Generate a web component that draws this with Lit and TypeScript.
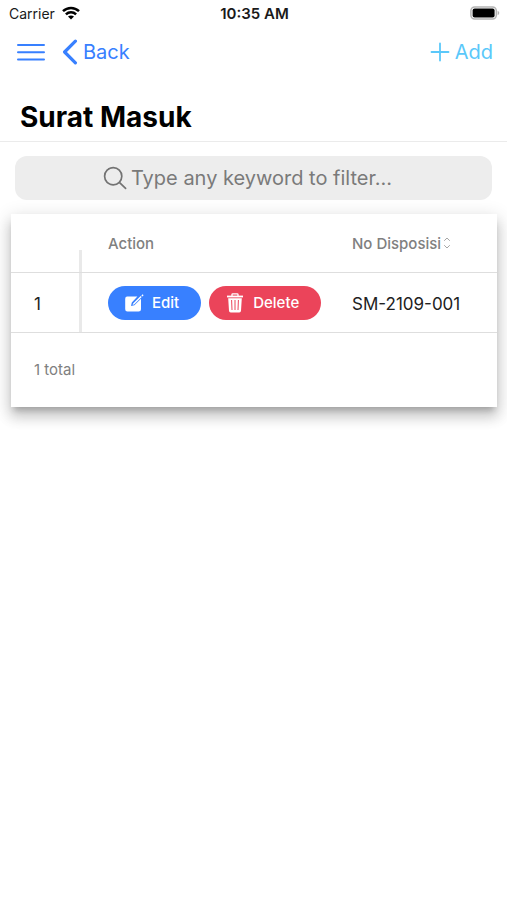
import { LitElement, html, css, svg } from "lit";
import { customElement, property, state } from "lit/decorators.js";

const wifiIcon = svg`<svg class="wifi" viewBox="0 0 18 14" aria-hidden="true">
  <g fill="none" stroke="#000" stroke-width="2.5">
    <path d="M1 5.2C5.6 .8 12.4 .8 17 5.2"/>
    <path d="M3.9 8.3C6.8 5.5 11.2 5.5 14.1 8.3"/>
  </g>
  <path d="M9 13.6 6 10.6C7.7 9 10.3 9 12 10.6Z"/>
</svg>`;

const batteryIcon = svg`<svg class="battery" viewBox="0 0 30 14" aria-hidden="true">
  <rect x=".9" y=".9" width="25.4" height="12.2" rx="3.8" fill="#fff" stroke="#b4b4b4" stroke-width="1.5"/>
  <rect x="2.6" y="2.5" width="22" height="9" rx="2" fill="#000"/>
  <path d="M27.6 4.8C29.8 5.6 29.8 8.4 27.6 9.2Z" fill="#b4b4b4"/>
</svg>`;

@customElement("status-bar")
export class StatusBar extends LitElement {
  @property() time = "";

  static styles = css`
    :host {
      display: grid;
      grid-template-columns: 1fr auto 1fr;
      align-items: center;
      height: 26px;
      padding: 0 7px 0 9px;
      font-size: 14px;
      color: #1a1a1a;
    }
    .carrier {
      display: flex;
      align-items: center;
      gap: 7px;
    }
    .time {
      font-size: 15px;
      font-weight: 600;
    }
    .wifi {
      width: 18px;
      height: 14px;
    }
    .battery {
      width: 30px;
      height: 14px;
      justify-self: end;
    }
  `;

  render() {
    return html`
      <span class="carrier">Carrier ${wifiIcon}</span>
      <span class="time">${this.time}</span>
      ${batteryIcon}
    `;
  }
}

interface Letter {
  id: number;
  number: string;
}

@customElement("letter-table")
export class LetterTable extends LitElement {
  @property({ attribute: false }) rows: Letter[] = [];

  static styles = css`
    :host {
      display: block;
      background: #fff;
      box-shadow:
        0 6px 6px -3px rgba(0, 0, 0, 0.2),
        0 10px 12px 1px rgba(0, 0, 0, 0.14),
        0 4px 17px 2px rgba(0, 0, 0, 0.12);
    }
    table {
      width: 100%;
      table-layout: fixed;
      border-collapse: separate;
      border-spacing: 0;
    }
    th,
    td {
      height: 58px;
      padding: 0 0 0 26px;
      text-align: left;
      vertical-align: middle;
      border-bottom: 1px solid #dedede;
      white-space: nowrap;
    }
    th {
      font-size: 15px;
      font-weight: 500;
      color: #808080;
    }
    td {
      font-size: 17px;
      color: #212121;
      padding-top: 2px;
      height: 57px;
    }
    .index {
      width: 48px;
      padding-left: 23px;
      position: relative;
    }
    .index::after {
      content: "";
      position: absolute;
      right: 0;
      top: 0;
      bottom: 0;
      width: 3px;
      background: #e9e9e9;
    }
    th.index::after {
      top: 36px;
    }
    .action {
      width: 218px;
    }
    .sort {
      font: inherit;
      color: inherit;
      background: none;
      border: 0;
      padding: 0;
      display: flex;
      align-items: center;
      gap: 2px;
    }
    .sort svg {
      width: 8px;
      height: 12px;
    }
    .buttons {
      display: flex;
      gap: 8px;
      padding-bottom: 2px;
    }
    .pill {
      display: flex;
      align-items: center;
      gap: 8px;
      height: 34px;
      padding: 0 22px 0 16px;
      border: 0;
      border-radius: 17px;
      color: #fff;
      font: 500 15px/20px Inter, sans-serif;
    }
    .pill svg {
      width: 20px;
      height: 20px;
    }
    .edit {
      background: #3880ff;
    }
    .delete {
      background: #eb445a;
    }
    .footer {
      padding: 27px 23px;
      font-size: 15px;
      line-height: 20px;
      color: #808080;
    }
  `;

  render() {
    return html`
      <table>
        <thead>
          <tr>
            <th class="index" scope="col" aria-label="Row"></th>
            <th class="action" scope="col">Action</th>
            <th scope="col">
              <button class="sort" type="button">
                No Disposisi
                <svg viewBox="0 0 8 12" fill="none" stroke="#a6a6a6" aria-hidden="true">
                  <path d="M1.2 3.8 4 1 6.8 3.8M1.2 8.2 4 11 6.8 8.2" />
                </svg>
              </button>
            </th>
          </tr>
        </thead>
        <tbody>
          ${this.rows.map(
            (row) => html`<tr>
              <td class="index">${row.id}</td>
              <td class="action">
                <div class="buttons">
                  <button class="pill edit" type="button">
                    <svg viewBox="0 0 20 20" aria-hidden="true">
                      <path
                        fill="#fff"
                        d="M3.2 3.6H13.4L7.8 9.6 7 13 10.4 12.2 17 5.8V16.2Q17 18.6 14.6 18.6H3.4Q1.2 18.6 1.2 16.2V5.8Q1.2 3.6 3.2 3.6Z"
                      />
                      <path
                        fill="#fff"
                        d="M18.6 1.2 19.6 2.2 18.4 3.4 17.4 2.4ZM16.7 3 17.7 4 10.4 11.3 8.6 11.9 9.3 10.2Z"
                      />
                    </svg>
                    Edit
                  </button>
                  <button class="pill delete" type="button">
                    <svg viewBox="0 0 20 20" aria-hidden="true">
                      <path
                        fill="none"
                        stroke="#fff"
                        stroke-width="1.3"
                        d="M7 3V1.6Q7 .8 7.8 .8H12.2Q13 .8 13 1.6V3"
                      />
                      <path fill="#fff" d="M2 2.6H18V4.4H2Z" />
                      <path
                        fill="#fff"
                        d="M3.2 5.2H16.8L16 17.8Q15.9 19.4 14.3 19.4H5.7Q4.1 19.4 4 17.8Z"
                      />
                      <path
                        fill="none"
                        stroke="#eb445a"
                        d="M6.6 7 7 17M10 7V17M13.4 7 13 17"
                      />
                    </svg>
                    Delete
                  </button>
                </div>
              </td>
              <td>${row.number}</td>
            </tr>`,
          )}
        </tbody>
      </table>
      <div class="footer">${this.rows.length} total</div>
    `;
  }
}

@customElement("app-root")
export class AppRoot extends LitElement {
  @state() private rows: Letter[] = [{ id: 1, number: "SM-2109-001" }];

  static styles = css`
    :host {
      display: block;
      min-height: 100vh;
      background: #fff;
      font-family: Inter, sans-serif;
      color: #000;
    }
    .toolbar {
      display: flex;
      align-items: center;
      height: 52px;
      padding: 0 14px 0 16px;
    }
    .toolbar button,
    .toolbar a {
      display: flex;
      align-items: center;
      padding: 0;
      border: 0;
      background: none;
      font: 400 20px/24px Inter, sans-serif;
      text-decoration: none;
      color: #3880ff;
    }
    .menu svg {
      width: 30px;
      height: 24px;
    }
    .toolbar .back {
      gap: 5px;
      margin-left: 16px;
    }
    .back svg {
      width: 16px;
      height: 26px;
    }
    .toolbar .add {
      gap: 5px;
      margin-left: auto;
      color: #5ac8fa;
    }
    .add svg {
      width: 20px;
      height: 20px;
    }
    h1 {
      margin: 0;
      padding: 22px 20px 7px;
      font-size: 28px;
      line-height: 34px;
      font-weight: 700;
      border-bottom: 1px solid #ebebeb;
    }
    .search {
      display: flex;
      align-items: center;
      justify-content: center;
      gap: 4px;
      height: 44px;
      margin: 14px 15px;
      padding-right: 12px;
      box-sizing: border-box;
      border-radius: 12px;
      background: #ededed;
    }
    .search svg {
      width: 24px;
      height: 24px;
    }
    .search input {
      field-sizing: content;
      padding: 0;
      border: 0;
      outline: 0;
      background: none;
      font: 400 20px/24px Inter, sans-serif;
      color: #000;
    }
    .search input::placeholder {
      color: #7a7a7a;
      opacity: 1;
    }
    letter-table {
      margin: 0 10px 0 11px;
    }
  `;

  render() {
    return html`
      <status-bar time="10:35 AM"></status-bar>
      <header>
        <nav class="toolbar">
          <button class="menu" type="button" aria-label="Menu">
            <svg viewBox="0 0 30 24" stroke="#3880ff" stroke-width="2" stroke-linecap="round" aria-hidden="true">
              <path d="M2 5H28M2 12.3H28M2 19.6H28" />
            </svg>
          </button>
          <a class="back" href="#back">
            <svg viewBox="0 0 16 26" fill="none" stroke="#3880ff" stroke-width="3.2" stroke-linecap="round" stroke-linejoin="round" aria-hidden="true">
              <path d="M13.4 2.2 2.6 13 13.4 23.8" />
            </svg>
            Back
          </a>
          <button class="add" type="button">
            <svg viewBox="0 0 20 20" stroke="#5ac8fa" stroke-width="1.8" stroke-linecap="round" aria-hidden="true">
              <path d="M10 1.5V18.5M1.5 10H18.5" />
            </svg>
            Add
          </button>
        </nav>
        <h1>Surat Masuk</h1>
      </header>
      <main>
        <label class="search">
          <svg viewBox="0 0 24 24" fill="none" stroke="#737373" stroke-width="1.7" stroke-linecap="round" aria-hidden="true">
            <circle cx="10.2" cy="10.2" r="8.6" />
            <path d="M16.6 16.6 22.6 22.4" />
          </svg>
          <input type="text" aria-label="Filter" placeholder="Type any keyword to filter..." />
        </label>
        <letter-table .rows=${this.rows}></letter-table>
      </main>
    `;
  }
}
